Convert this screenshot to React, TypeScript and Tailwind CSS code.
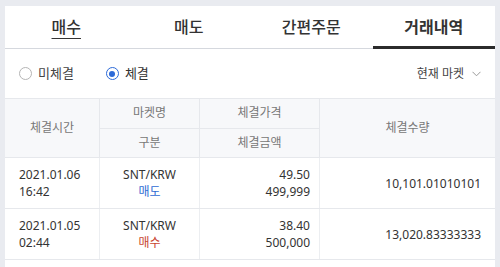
import React from "react";

const tabs = ["매수", "매도", "간편주문", "거래내역"];

const rows = [
  { date: "2021.01.06", time: "16:42", market: "SNT/KRW", side: "매도", price: "49.50", total: "499,999", qty: "10,101.01010101" },
  { date: "2021.01.05", time: "02:44", market: "SNT/KRW", side: "매수", price: "38.40", total: "500,000", qty: "13,020.83333333" },
];

const App: React.FC = () => {
  return (
    <div
      className="h-[267px] w-[500px] overflow-hidden bg-[#e9ebf0] pl-[5px] pr-[5px] pt-[6px]"
      style={{ fontFamily: '"Noto Sans", "Noto Sans CJK KR", sans-serif' }}
    >
      <div className="h-full bg-white">
        {/* Tabs */}
        <div className="flex h-[43px] border-b border-[#d5d8de]">
          {tabs.map((t, i) => (
            <div
              key={t}
              className={
                "relative flex flex-1 items-center justify-center text-[16px] text-[#333] " +
                (i === 0 ? "font-medium underline underline-offset-[5px] decoration-1" : "") +
                (i === 3 ? "font-bold" : "") +
                (i === 1 || i === 2 ? "font-medium" : "")
              }
            >
              {t}
              {i === 3 && <span className="absolute -bottom-px left-0 right-0 h-[3px] bg-[#2b2b2b]" />}
            </div>
          ))}
        </div>

        {/* Filter */}
        <div className="flex h-[50px] items-center border-b border-[#e6e8ec] pl-[14px] pr-[14px] text-[13px] text-[#333]">
          <div className="flex items-center gap-[6px]">
            <span className="h-[13px] w-[13px] rounded-full border border-[#b5b5b5]" />
            <span className="text-[#444]">미체결</span>
          </div>
          <div className="ml-[32px] flex items-center gap-[6px]">
            <span className="flex h-[13px] w-[13px] items-center justify-center rounded-full border-[1.5px] border-[#2c6ad8]">
              <span className="h-[6px] w-[6px] rounded-full bg-[#2c6ad8]" />
            </span>
            <span>체결</span>
          </div>
          <div className="ml-auto flex items-center gap-[8px] text-[12px] text-[#444]">
            <span>현재 마켓</span>
            <svg width="9" height="6" viewBox="0 0 9 6" fill="none">
              <path d="M0.5 0.8 L4.5 4.8 L8.5 0.8" stroke="#9a9a9a" strokeWidth="1" />
            </svg>
          </div>
        </div>

        {/* Table */}
        <div className="text-[12px]">
          <div className="flex h-[59px] border-b border-[#e6e8ec] bg-[#f7f8fa] text-[#777]">
            <div className="flex w-[95px] items-center justify-center border-r border-[#e6e8ec]">체결시간</div>
            <div className="flex w-[100px] flex-col border-r border-[#e6e8ec]">
              <div className="flex flex-1 items-center justify-center border-b border-[#e6e8ec]">마켓명</div>
              <div className="flex flex-1 items-center justify-center">구분</div>
            </div>
            <div className="flex w-[120px] flex-col border-r border-[#e6e8ec]">
              <div className="flex flex-1 items-center justify-center border-b border-[#e6e8ec]">체결가격</div>
              <div className="flex flex-1 items-center justify-center">체결금액</div>
            </div>
            <div className="flex flex-1 items-center justify-center">체결수량</div>
          </div>

          {rows.map((r) => (
            <div key={r.date} className="flex h-[51px] border-b border-[#e6e8ec] text-[#333] leading-[17px]">
              <div className="flex w-[95px] flex-col justify-center border-r border-[#eceef1] pl-[14px]">
                <span>{r.date}</span>
                <span>{r.time}</span>
              </div>
              <div className="flex w-[100px] flex-col items-center justify-center border-r border-[#eceef1]">
                <span>{r.market}</span>
                <span className={r.side === "매도" ? "text-[#2f6bd4]" : "text-[#c8452f]"}>{r.side}</span>
              </div>
              <div className="flex w-[120px] flex-col items-end justify-center border-r border-[#eceef1] pr-[9px]">
                <span>{r.price}</span>
                <span>{r.total}</span>
              </div>
              <div className="flex flex-1 items-center justify-end pr-[14px]">{r.qty}</div>
            </div>
          ))}
        </div>
      </div>
    </div>
  );
};

export default App;
